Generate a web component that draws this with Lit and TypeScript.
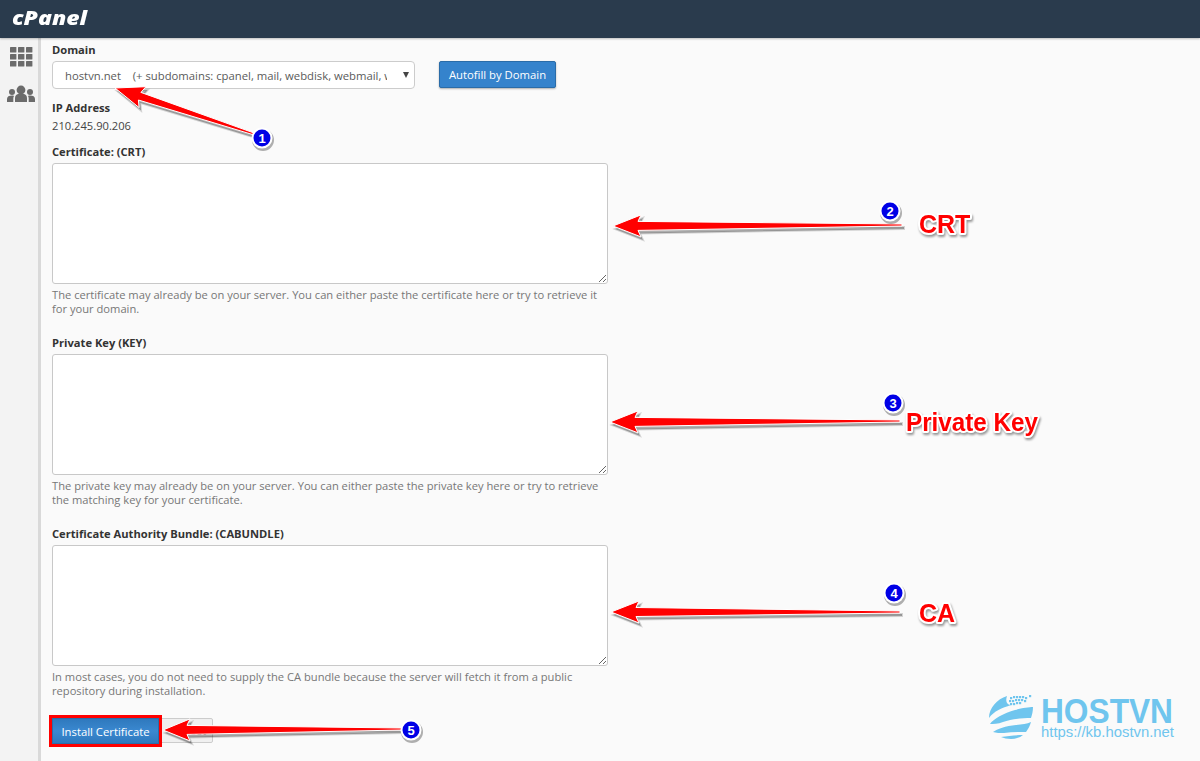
import { LitElement, html, css, svg } from "lit";
import { customElement } from "lit/decorators.js";

const arrow = (x0: number, y0: number, x1: number, y1: number, w = 8, hw = 11, hl = 24) => {
  // tail at (x0,y0), tip at (x1,y1); the shaft tapers toward the tail
  const dx = x1 - x0, dy = y1 - y0;
  const L = Math.hypot(dx, dy);
  const ux = dx / L, uy = dy / L, nx = -uy, ny = ux;
  const bx = x1 - ux * hl, by = y1 - uy * hl;
  const t = 1;
  const p = [
    [x0 + nx * t, y0 + ny * t],
    [bx + nx * w / 2, by + ny * w / 2],
    [bx + nx * hw - ux * 3, by + ny * hw - uy * 3],
    [x1, y1],
    [bx - nx * hw - ux * 3, by - ny * hw - uy * 3],
    [bx - nx * w / 2, by - ny * w / 2],
    [x0 - nx * t, y0 - ny * t],
  ].map((q) => q.map((v) => v.toFixed(1)).join(",")).join(" ");
  return svg`<polygon class="ar-shadow" points=${p} transform="translate(2 3)"></polygon>
    <polygon class="ar" points=${p}></polygon>`;
};

const badge = (cx: number, cy: number, n: string) => svg`
  <circle class="b-shadow" cx=${cx + 1} cy=${cy + 2} r="11"></circle>
  <circle class="b-ring" cx=${cx} cy=${cy} r="10.5"></circle>
  <circle class="b-fill" cx=${cx} cy=${cy} r="8.5"></circle>
  <text class="b-num" x=${cx} y=${cy + 4.5} text-anchor="middle">${n}</text>`;

const squares: [number, number][] = [
  [1010, 697], [1013, 696], [1016, 696], [1019, 696], [1022, 696], [1025, 697], [1029, 695],
  [1009, 700], [1012, 700], [1015, 699], [1018, 699], [1021, 699], [1024, 700],
  [1010, 703], [1013, 703], [1016, 702], [1019, 702],
];

@customElement("app-root")
export class AppRoot extends LitElement {
  static styles = css`
    :host { display: block; width: 1200px; height: 761px; position: relative; overflow: hidden;
      font-family: "Open Sans", sans-serif; background: #fafafa; color: #333; }
    .top { height: 38px; background: #2a3b4d; display: flex; align-items: center; padding-left: 12px;
      box-shadow: 0 1px 2px rgba(0,0,0,.25); position: relative; }
    .brand { color: #fff; font: italic 800 20px/1 "Open Sans", sans-serif; margin-top: -2px;
      transform: scaleX(1.15); transform-origin: left center; }
    .body { display: flex; height: 723px; }
    .side { width: 38px; background: #f3f3f3; border-right: 3px solid #d9d9d9; display: flex; flex-direction: column;
      align-items: center; padding-top: 9px; gap: 18px; box-sizing: content-box; flex: none; }
    .side svg { margin-left: 4px; }
    .main { padding: 4px 0 0 11px; flex: 1; font-size: 11.17px; }
    .lbl { font-weight: 700; font-size: 11.17px; line-height: 15px; color: #333; }
    .row { display: flex; gap: 24px; margin-top: 4px; align-items: flex-start; }
    .sel { width: 363px; height: 28px; box-sizing: border-box; border: 1px solid #ccc; border-radius: 4px; background: #fff;
      display: flex; align-items: center; padding-left: 12px; position: relative; color: #5a5a5a; font-size: 11.3px; white-space: pre; overflow: hidden; }
    .sel .clip { width: 322px; overflow: hidden; }
    .caret { position: absolute; right: 5px; top: 10px; width: 0; height: 0; border-left: 3.5px solid transparent;
      border-right: 3.5px solid transparent; border-top: 6px solid #444; }
    .btn { background: #3583cc; border: 1px solid #2a6ca8; border-radius: 2px; color: #fff; font: 400 11.3px "Open Sans", sans-serif;
      box-shadow: 0 1px 2px rgba(0,0,0,.3); padding: 0; }
    .auto { width: 117px; height: 27px; }
    .ip { margin-top: 11px; }
    .ipv { line-height: 15px; margin-top: 3px; color: #444; font-size: 11.17px; }
    .cert { margin-top: 11px; }
    .ta { display: block; width: 556px; height: 121px; box-sizing: border-box; border: 1px solid #c8c8c8; border-radius: 3px;
      background: #fff; margin: 4px 0 0; padding: 0; }
    .help { width: 556px; color: #777; font-size: 11.17px; line-height: 14px; margin-top: 4px; }
    .next { margin-top: 19px; }
    .acts { display: flex; margin-top: 20px; align-items: flex-start; }
    .inst { width: 107px; height: 26px; position: relative; z-index: 1; outline: 3px solid #f00; border-radius: 0;
      background: linear-gradient(#2f79bd, #3a88d0 50%, #2f79bd); }
    .cancel { width: 54px; height: 25px; background: #f0f0f0; border: 1px solid #ccc; border-radius: 0 2px 2px 0;
      box-sizing: border-box; color: #333; font: 400 11px "Open Sans", sans-serif; padding: 0 0 0 12px; }
    svg.over { position: absolute; left: 0; top: 0; pointer-events: none; }
    .ar { fill: #f00; stroke: #fff; stroke-width: 1; stroke-linejoin: miter; }
    .ar-shadow { fill: rgba(0,0,0,.3); stroke: rgba(0,0,0,.15); stroke-width: 2; }
    .b-shadow { fill: rgba(0,0,0,.3); }
    .b-ring { fill: #fff; }
    .b-fill { fill: #0000e6; }
    .b-num { fill: #fff; font: 700 13px "Liberation Sans", sans-serif; }
    .note { fill: #f00; font: 700 25px "Liberation Sans", sans-serif; stroke: #fff; stroke-width: 4px; paint-order: stroke;
      stroke-linejoin: round; filter: drop-shadow(1px 2px 1px rgba(0,0,0,.4)); }
    .logo1 { fill: #6fc5ee; font: 700 35px "Liberation Sans", sans-serif; }
    .logo2 { fill: #6fc5ee; font: 400 14.5px "Liberation Sans", sans-serif; }
    .globe { fill: #6fc5ee; }
  `;

  render() {
    return html`
      <div class="top"><span class="brand">cPanel</span></div>
      <div class="body">
        <div class="side">
          <svg width="23" height="20" viewBox="0 0 23 20" fill="#6b6b6b">
            ${[0, 8, 16].map((x) => [0, 7, 14].map((y) => svg`<rect x=${x} y=${y} width="6.4" height="5.6" rx=".6"></rect>`))}
          </svg>
          <svg width="28" height="18" viewBox="0 0 28 18" fill="#6b6b6b">
            <circle cx="14" cy="5" r="4.4"></circle><path d="M8 17v-4c0-3 2-4.500 6-4.500s6 1.500 6 4.500v4z"></path>
            <circle cx="5" cy="7" r="3"></circle><path d="M0 17v-3c0-2.500 2-3.500 5-3.500 1 0 1.500.1 2 .4-.5.8-.7 1.600-.7 2.600v3.500z"></path>
            <circle cx="23" cy="7" r="3"></circle><path d="M28 17v-3c0-2.500-2-3.500-5-3.500-1 0-1.500.1-2 .4.500.8.700 1.600.700 2.600v3.500z"></path>
          </svg>
        </div>
        <div class="main">
          <div class="lbl">Domain</div>
          <div class="row">
            <div class="sel"><span class="clip">hostvn.net    (+ subdomains: cpanel, mail, webdisk, webmail, www)</span><span class="caret"></span></div>
            <button class="btn auto">Autofill by Domain</button>
          </div>
          <div class="lbl ip">IP Address</div>
          <div class="ipv">210.245.90.206</div>
          <div class="lbl cert">Certificate: (CRT)</div>
          <textarea class="ta"></textarea>
          <div class="help">The certificate may already be on your server. You can either paste the certificate here or try to retrieve it for your domain.</div>
          <div class="lbl next">Private Key (KEY)</div>
          <textarea class="ta"></textarea>
          <div class="help">The private key may already be on your server. You can either paste the private key here or try to retrieve the matching key for your certificate.</div>
          <div class="lbl next">Certificate Authority Bundle: (CABUNDLE)</div>
          <textarea class="ta"></textarea>
          <div class="help">In most cases, you do not need to supply the CA bundle because the server will fetch it from a public repository during installation.</div>
          <div class="acts">
            <button class="btn inst">Install Certificate</button>
            <button class="cancel">Reset</button>
          </div>
        </div>
      </div>
      <svg class="over" width="1200" height="761" viewBox="0 0 1200 761">
        ${arrow(254, 134, 115, 88, 8, 11, 26)}
        ${arrow(902, 225, 613, 226, 9, 11, 25)}
        ${arrow(900, 421, 610, 422, 9, 11, 25)}
        ${arrow(900, 612, 611, 612, 9, 11, 25)}
        ${arrow(402, 729, 163, 730, 9, 11, 24)}
        ${badge(262, 138, "1")}
        ${badge(890, 211, "2")}
        ${badge(893, 403, "3")}
        ${badge(894, 593, "4")}
        ${badge(411, 730, "5")}
        <text class="note" x="919" y="233">CRT</text>
        <text class="note" x="906" y="431" textLength="132" lengthAdjust="spacingAndGlyphs">Private Key</text>
        <text class="note" x="919" y="622">CA</text>
        <g class="globe">
          <path d="M989 718c0-10 8-19 18-22-1 3-1 5 0 7 1 1 2 2 4 2-9 3-17 6-22 13z"></path>
          <path d="M990 724c3-5 14-11 25-14 7-2 14-3 18-3 0 4-1 8-2 11-9 0-20 1-28 4-5 2-10 2-13 2z"></path>
          <path d="M993 732c4-3 13-6 23-7 6-1 11-1 15-3-1 4-3 7-5 10-8 0-15 0-22 1-4 0-8 0-11-1z"></path>
          <path d="M1001 737c7-1 15-2 22-2-4 3-8 4-12 4-4 0-7-1-10-2z"></path>
          ${squares.map(([x, y]) => svg`<rect x=${x} y=${y} width="2.2" height="2.2"></rect>`)}
        </g>
        <text class="logo1" x="1041" y="723" textLength="132" lengthAdjust="spacingAndGlyphs">HOSTVN</text>
        <text class="logo2" x="1041" y="737" textLength="133" lengthAdjust="spacingAndGlyphs">https://kb.hostvn.net</text>
      </svg>
    `;
  }
}
